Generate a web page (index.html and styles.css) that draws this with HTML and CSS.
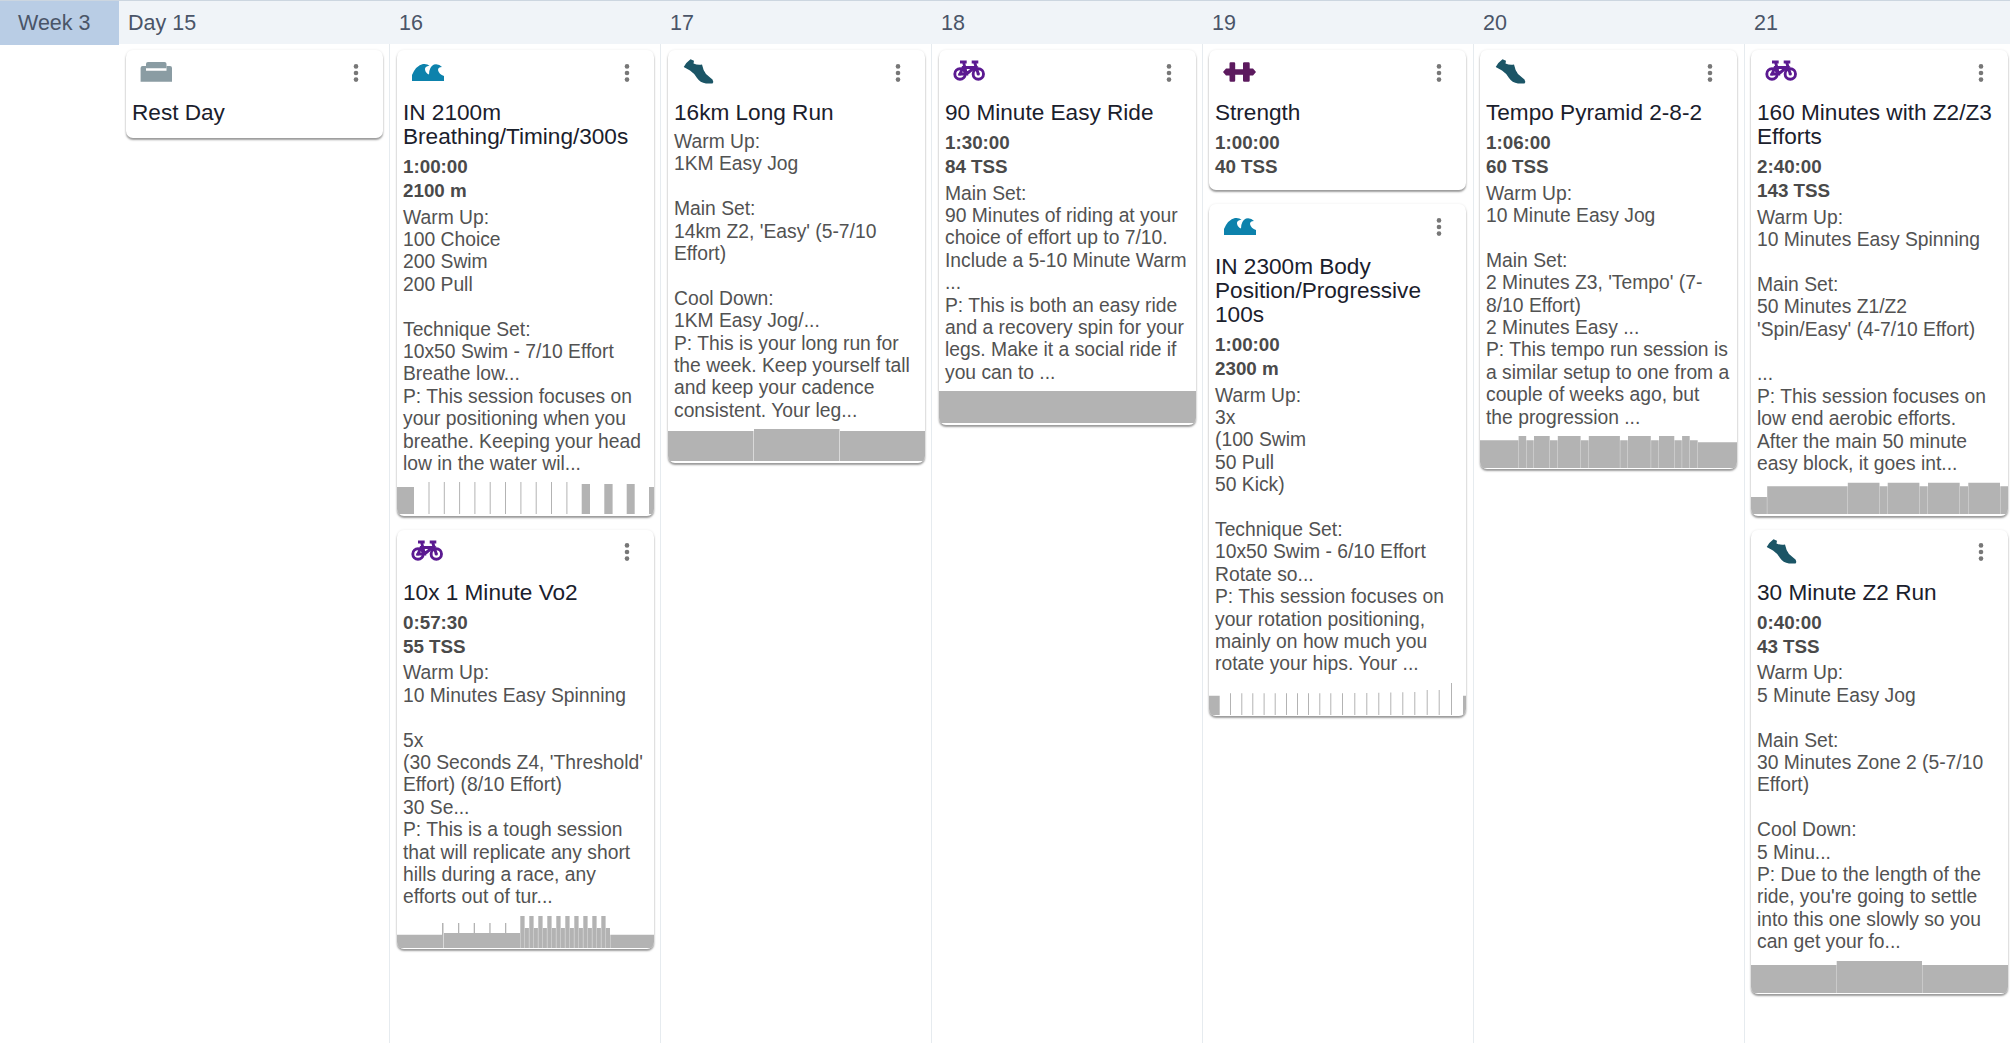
FILE: index.html
```html
<!DOCTYPE html>
<html lang="en">
<head>
<meta charset="utf-8">
<title>Training Calendar</title>
<link rel="stylesheet" href="styles.css">
</head>
<body>
<svg class="defs" width="0" height="0" aria-hidden="true">
  <defs>
    <symbol id="i-dots" viewBox="0 0 6 18"><circle cx="3" cy="2.4" r="2.3"/><circle cx="3" cy="9" r="2.3"/><circle cx="3" cy="15.6" r="2.3"/></symbol>
    <symbol id="i-rest" viewBox="0 0 34 26"><path d="M6 5q0-2 2-2h16.5q2 0 2 2v4.3H6z"/><path d="M.6 22.7V9q0-2 2-2H6v4.7h20.500V7H30q2 0 2 2v13.700z"/></symbol>
    <symbol id="i-swim" viewBox="0 0 34 26"><path d="M1 22V16Q5 6.500 12 5Q16 4.500 18.500 6.500Q13.500 7.500 14 10.500Q14.500 14 18 15.500Q18 8 23 5.500Q28 4.500 31 8Q27 8 27 11Q28 15.500 33 17V22Z"/></symbol>
    <symbol id="i-run" viewBox="0 0 34 26"><path d="M8.500.3L12 1.800L11.500 4.500Q16 6.500 20 5.500Q21 11 24 15Q28 18.500 30.500 20.500Q32 23 30.500 24.500L24 24.500Q18 23.500 15 19Q12 14 8 11.500L1.700 8Q3.500 4 8.500.3Z"/></symbol>
    <symbol id="i-bike" viewBox="0 0 34 26"><g fill="none" stroke="currentColor" stroke-width="2.900"><circle cx="7" cy="15" r="5.200"/><circle cx="25.300" cy="15" r="5.200"/><path d="M7 3h6.700M18.700 3h6.600M10.500 3L13.500 15H7L10 8.500H21.500L13.500 15M21.500 3L25.300 15"/></g><circle cx="7" cy="15" r="1.600"/><circle cx="25.300" cy="15" r="1.600"/></symbol>
    <symbol id="i-lift" viewBox="0 0 34 26"><path d="M0 13L3 9.500H6.500V4.500Q6.500 3.300 7.700 3.300H11Q12.200 3.300 12.200 4.500V10.300H20V4.500Q20 3.300 21.200 3.300H25.500Q26.700 3.300 26.700 4.500V9.500H30L33 13L30 16.500H26.700V21.500Q26.700 22.700 25.500 22.700H21.200Q20 22.700 20 21.500V15.700H12.200V21.500Q12.200 22.700 11 22.700H7.700Q6.500 22.700 6.500 21.500V16.500H3Z"/></symbol>
  </defs>
</svg>

<header class="top">
  <div class="week">Week 3</div>
  <div class="day">Day 15</div>
  <div class="day">16</div>
  <div class="day">17</div>
  <div class="day">18</div>
  <div class="day">19</div>
  <div class="day">20</div>
  <div class="day">21</div>
</header>

<main class="board">
  <div class="spacer"></div>

  <section class="col col-first">
    <article class="card card-plain">
      <div class="head"><svg class="icon rest"><use href="#i-rest"/></svg><svg class="dots"><use href="#i-dots"/></svg></div>
      <h3 class="title title-only">Rest Day</h3>
    </article>
  </section>

  <section class="col">
    <article class="card">
      <div class="head"><svg class="icon swim"><use href="#i-swim"/></svg><svg class="dots"><use href="#i-dots"/></svg></div>
      <h3 class="title">IN 2100m<br>Breathing/Timing/300s</h3>
      <div class="stats">1:00:00<br>2100 m</div>
      <p class="desc">Warm Up:
100 Choice
200 Swim
200 Pull

Technique Set:
10x50 Swim - 7/10 Effort
Breathe low...
P: This session focuses on
your positioning when you
breathe. Keeping your head
low in the water wil...</p>
      <svg class="chart" viewBox="0 0 257 32" preserveAspectRatio="none"><path d="M0 5H17V32H0ZM31.500 0h1v32h-1ZM46.800 0h1v32h-1ZM62.100 0h1v32h-1ZM77.400 0h1v32h-1ZM92.700 0h1v32h-1ZM108 0h1v32h-1ZM123.400 0h1v32h-1ZM138.700 0h1v32h-1ZM154 0h1v32h-1ZM169.400 0h1v32h-1ZM184.700 2H193V32H184.700ZM207.300 2H215.600V32H207.300ZM229.700 2H237.700V32H229.700ZM252 5H257V32H252Z"/></svg>
    </article>
    <article class="card">
      <div class="head"><svg class="icon bike"><use href="#i-bike"/></svg><svg class="dots"><use href="#i-dots"/></svg></div>
      <h3 class="title">10x 1 Minute Vo2</h3>
      <div class="stats">0:57:30<br>55 TSS</div>
      <p class="desc">Warm Up:
10 Minutes Easy Spinning

5x
(30 Seconds Z4, 'Threshold'
Effort) (8/10 Effort)
30 Se...
P: This is a tough session
that will replicate any short
hills during a race, any
efforts out of tur...</p>
      <svg class="chart" viewBox="0 0 257 32" preserveAspectRatio="none"><path d="M0 18.700H45V32H0ZM45 7h1.500V32H45ZM47 17H123V32H47ZM61 7h1.300V17H61ZM76.700 7h1.300V17H76.700ZM92.300 7h1.300V17H92.300ZM108 7h1.300V17H108ZM123.300 0h4.300V32h-4.300ZM127.900 12h4V32h-4ZM132.300 0h4.300V32h-4.300ZM136.900 12h4V32h-4ZM141.300 0h4.300V32h-4.300ZM145.900 12h4V32h-4ZM150.300 0h4.300V32h-4.300ZM154.900 12h4V32h-4ZM159.300 0h4.300V32h-4.300ZM163.900 12h4V32h-4ZM168.300 0h4.300V32h-4.300ZM172.900 12h4V32h-4ZM177.300 0h4.300V32h-4.300ZM181.900 12h4V32h-4ZM186.300 0h4.300V32h-4.300ZM190.900 12h4V32h-4ZM195.300 0h4.300V32h-4.300ZM199.900 12h4V32h-4ZM204.300 0h4.300V32h-4.300ZM208.900 12H213V32H208.900ZM213.300 18.700H257V32H213.300Z"/></svg>
    </article>
  </section>

  <section class="col">
    <article class="card">
      <div class="head"><svg class="icon run"><use href="#i-run"/></svg><svg class="dots"><use href="#i-dots"/></svg></div>
      <h3 class="title">16km Long Run</h3>
      <p class="desc">Warm Up:
1KM Easy Jog

Main Set:
14km Z2, 'Easy' (5-7/10
Effort)

Cool Down:
1KM Easy Jog/...
P: This is your long run for
the week. Keep yourself tall
and keep your cadence
consistent. Your leg...</p>
      <svg class="chart" viewBox="0 0 257 32" preserveAspectRatio="none"><path d="M0 2H85.500V32H0ZM86 0H171.500V32H86ZM172 2H257V32H172Z"/></svg>
    </article>
  </section>

  <section class="col">
    <article class="card">
      <div class="head"><svg class="icon bike"><use href="#i-bike"/></svg><svg class="dots"><use href="#i-dots"/></svg></div>
      <h3 class="title">90 Minute Easy Ride</h3>
      <div class="stats">1:30:00<br>84 TSS</div>
      <p class="desc">Main Set:
90 Minutes of riding at your
choice of effort up to 7/10.
Include a 5-10 Minute Warm
...
P: This is both an easy ride
and a recovery spin for your
legs. Make it a social ride if
you can to ...</p>
      <svg class="chart" viewBox="0 0 257 32" preserveAspectRatio="none"><path d="M0 0H257V32H0Z"/></svg>
    </article>
  </section>

  <section class="col">
    <article class="card card-plain">
      <div class="head"><svg class="icon lift"><use href="#i-lift"/></svg><svg class="dots"><use href="#i-dots"/></svg></div>
      <h3 class="title">Strength</h3>
      <div class="stats">1:00:00<br>40 TSS</div>
    </article>
    <article class="card">
      <div class="head"><svg class="icon swim"><use href="#i-swim"/></svg><svg class="dots"><use href="#i-dots"/></svg></div>
      <h3 class="title">IN 2300m Body<br>Position/Progressive<br>100s</h3>
      <div class="stats">1:00:00<br>2300 m</div>
      <p class="desc">Warm Up:
3x
(100 Swim
50 Pull
50 Kick)

Technique Set:
10x50 Swim - 6/10 Effort
Rotate so...
P: This session focuses on
your rotation positioning,
mainly on how much you
rotate your hips. Your ...</p>
      <svg class="chart" viewBox="0 0 257 32" preserveAspectRatio="none"><path d="M0 12.700H10.700V32H0ZM21 10.300h1V32h-1ZM32.300 10.300h1V32h-1ZM43.300 10.300h1V32h-1ZM54.600 10.300h1V32h-1ZM65.700 10.300h1V32h-1ZM77 10.300h1V32h-1ZM88 10.300h1V32h-1ZM99 10.300h1V32h-1ZM110.300 10.300h1V32h-1ZM121.300 10.300h1V32h-1ZM133 10.300h1V32h-1ZM145.300 10h1V32h-1ZM157.300 10h1V32h-1ZM169.300 9.700h1V32h-1ZM181.300 9.500h1V32h-1ZM193.300 9.300h1V32h-1ZM205.300 9h1V32h-1ZM217.700 7h1V32h-1ZM229.700 7h1V32h-1ZM242 0h1V32h-1ZM254 12.700H257V32H254Z"/></svg>
    </article>
  </section>

  <section class="col">
    <article class="card">
      <div class="head"><svg class="icon run"><use href="#i-run"/></svg><svg class="dots"><use href="#i-dots"/></svg></div>
      <h3 class="title">Tempo Pyramid 2-8-2</h3>
      <div class="stats">1:06:00<br>60 TSS</div>
      <p class="desc">Warm Up:
10 Minute Easy Jog

Main Set:
2 Minutes Z3, 'Tempo' (7-
8/10 Effort)
2 Minutes Easy ...
P: This tempo run session is
a similar setup to one from a
couple of weeks ago, but
the progression ...</p>
      <svg class="chart" viewBox="0 0 257 32" preserveAspectRatio="none"><path d="M0 4.300H38.300V32H0ZM38.600 0H46.200V32H38.600ZM46.500 4.300H53.700V32H46.500ZM54 0H69.700V32H54ZM70 4.300H77.500V32H70ZM77.800 0H100.600V32H77.800ZM100.900 4.300H108.500V32H100.900ZM108.800 0H139.900V32H108.800ZM140.200 4.300H147.700V32H140.200ZM148 0H170.800V32H148ZM171.100 4.300H178.700V32H171.100ZM179 0H194.300V32H179ZM194.600 4.300H201.800V32H194.600ZM202.100 0H209.700V32H202.100ZM210 4.300H217.700V32H210ZM218 6.300H257V32H218Z"/></svg>
    </article>
  </section>

  <section class="col">
    <article class="card">
      <div class="head"><svg class="icon bike"><use href="#i-bike"/></svg><svg class="dots"><use href="#i-dots"/></svg></div>
      <h3 class="title">160 Minutes with Z2/Z3<br>Efforts</h3>
      <div class="stats">2:40:00<br>143 TSS</div>
      <p class="desc">Warm Up:
10 Minutes Easy Spinning

Main Set:
50 Minutes Z1/Z2
'Spin/Easy' (4-7/10 Effort)

...
P: This session focuses on
low end aerobic efforts.
After the main 50 minute
easy block, it goes int...</p>
      <svg class="chart" viewBox="0 0 257 32" preserveAspectRatio="none"><path d="M0 15H15.900V32H0ZM16.200 4.300H96.500V32H16.200ZM96.800 .7H128.500V32H96.800ZM128.800 4.300H136.400V32H128.800ZM136.700 .7H168.400V32H136.700ZM168.700 4.300H176.700V32H168.700ZM177 .7H208.700V32H177ZM209 4.300H217V32H209ZM217.300 .7H249V32H217.300ZM249.300 4.300H257V32H249.300Z"/></svg>
    </article>
    <article class="card">
      <div class="head"><svg class="icon run"><use href="#i-run"/></svg><svg class="dots"><use href="#i-dots"/></svg></div>
      <h3 class="title">30 Minute Z2 Run</h3>
      <div class="stats">0:40:00<br>43 TSS</div>
      <p class="desc">Warm Up:
5 Minute Easy Jog

Main Set:
30 Minutes Zone 2 (5-7/10
Effort)

Cool Down:
5 Minu...
P: Due to the length of the
ride, you're going to settle
into this one slowly so you
can get your fo...</p>
      <svg class="chart" viewBox="0 0 257 32" preserveAspectRatio="none"><path d="M0 4H85.400V32H0ZM85.700 0H171V32H85.700ZM171.300 4H257V32H171.300Z"/></svg>
    </article>
  </section>
</main>
</body>
</html>
```

FILE: styles.css
```css
* { box-sizing: border-box; }

html, body {
  margin: 0;
  height: 100%;
  overflow: hidden;
  background: #fff;
  font-family: "Liberation Sans", Arial, sans-serif;
}

.defs { position: absolute; }

.top, .board {
  display: grid;
  width: 2016px;
}

.top {
  grid-template-columns: 119px repeat(7, 271px);
  height: 44px;
  background: #f0f4f8;
  border-top: 1px solid #ccd6e0;
  font-size: 21.5px;
  line-height: 44px;
  color: #4a5568;
}

.week {
  background: #b9cde5;
  padding-left: 18px;
}

.day { padding-left: 9px; }

.board {
  grid-template-columns: 118px repeat(7, 271px);
  height: 999px;
}

.col {
  display: flex;
  flex-direction: column;
  gap: 14px;
  padding: 6px 0 0 7px;
  border-left: 1px solid #e6ebef;
}

.col:nth-child(n+6) { padding-left: 6px; }

.col-first {
  border-left-color: transparent;
}

.card {
  width: 257px;
  background: #fff;
  border-radius: 7px;
  overflow: hidden;
  padding-bottom: 1.5px;
  box-shadow: 0 2px 2px rgba(0, 0, 0, 0.38), 0 0 3px rgba(0, 0, 0, 0.07);
}

.card-plain { padding-bottom: 11px; }

.head {
  display: flex;
  justify-content: space-between;
  height: 51px;
  padding: 9px 24px 0 14px;
}

.icon {
  display: block;
  width: 34px;
  height: 26px;
  fill: currentColor;
}

.rest { color: #8a9ca3; }
.swim { color: #0d82ac; }
.run  { color: #1b5566; }
.bike { color: #5b1a91; }
.lift { color: #5c1a5e; }

.dots {
  display: block;
  width: 6px;
  height: 18px;
  margin-top: 4.500px;
  fill: #777;
}

.title {
  margin: 0;
  padding: 0 6px;
  font-size: 22.600px;
  line-height: 24px;
  font-weight: 400;
  color: #1a202c;
  white-space: nowrap;
}

.title-only { margin-bottom: 2px; }

.stats {
  margin-top: 6px;
  padding: 0 6px;
  font-size: 18.800px;
  line-height: 24px;
  font-weight: 700;
  color: #4a4a4a;
}

.desc {
  margin: 6px 0 0;
  padding: 0 6px;
  font-size: 19.300px;
  line-height: 22.400px;
  color: #525252;
  white-space: pre;
}

.stats + .desc { margin-top: 3.500px; }

.chart {
  display: block;
  width: 100%;
  height: 32px;
  margin-top: 7px;
  fill: #b3b3b3;
}
```
